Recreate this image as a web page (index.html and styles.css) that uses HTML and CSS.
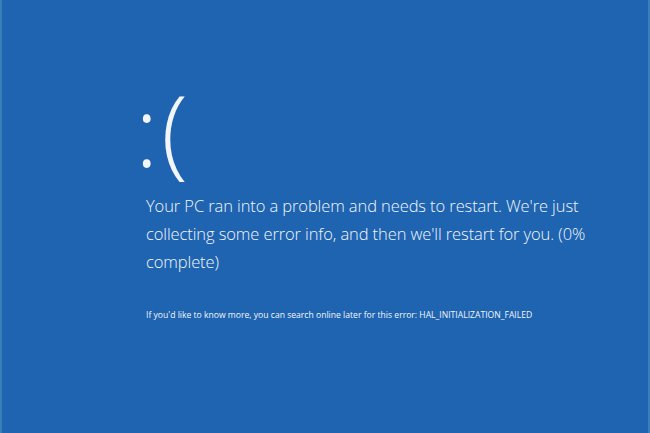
FILE: index.html
```html
<!DOCTYPE html>
<html lang="en">
<head>
    <meta charset="UTF-8">
    <meta name="viewport" content="width=device-width, initial-scale=1.0">
    <title>Your PC ran into a problem</title>
    <link rel="stylesheet" href="styles.css">
</head>
<body>
    <div class="screen">
        <div class="face">:(</div>
        <p class="message">Your PC ran into a problem and needs to restart. We're just collecting some error info, and then we'll restart for you. (0% complete)</p>
        <p class="details">If you'd like to know more, you can search online later for this error: HAL_INITIALIZATION_FAILED</p>
    </div>
</body>
</html>
```

FILE: styles.css
```css
html, body {
    margin: 0;
    height: 100%;
}

body {
    background: #1f64b0;
    font-family: "Open Sans", "Noto Sans", sans-serif;
    color: #f2f6fb;
}

.screen {
    height: 100%;
    box-sizing: border-box;
    padding: 70px 40px 0 144px;
    border-left: 2px solid #3b7fb8;
    border-right: 2px solid #3b7fb8;
}

.face {
    font-size: 98px;
    font-weight: 300;
    line-height: 118px;
    margin-left: -11px;
    margin-bottom: 4px;
    letter-spacing: 3px;
}

.message {
    margin: 0;
    font-size: 16.5px;
    font-weight: 300;
    line-height: 28px;
    letter-spacing: -0.1px;
    max-width: 450px;
}

.details {
    margin: 33px 0 0;
    font-size: 8.6px;
    line-height: 12px;
}
```
